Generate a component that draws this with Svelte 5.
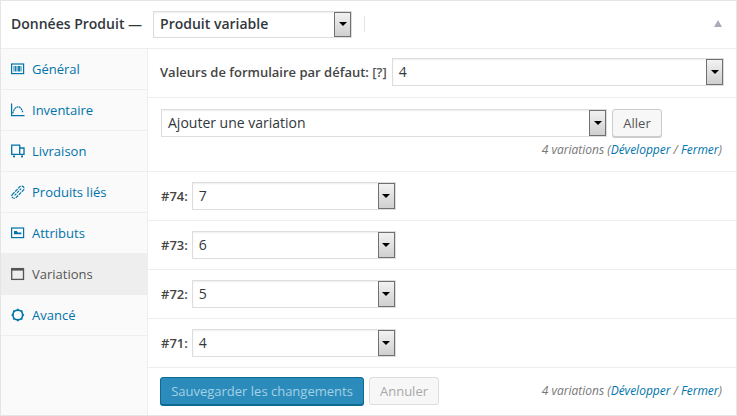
<script>
  const tabs = [
    { label: 'Général', icon: 'general' },
    { label: 'Inventaire', icon: 'inventory' },
    { label: 'Livraison', icon: 'shipping' },
    { label: 'Produits liés', icon: 'linked' },
    { label: 'Attributs', icon: 'attr' },
    { label: 'Variations', icon: 'var', active: true },
    { label: 'Avancé', icon: 'adv' }
  ];
  const variations = [['#74', '7'], ['#73', '6'], ['#72', '5'], ['#71', '4']];
</script>

{#snippet select(text, cls)}
  <div class="select {cls}">
    <span class="value">{text}</span>
    <span class="arrow"><i></i></span>
  </div>
{/snippet}

{#snippet count()}
  <div class="count">4 variations (<a href="#x">Développer</a> / <a href="#x">Fermer</a>)</div>
{/snippet}

<div class="panel">
  <header>
    <h2>Données Produit —</h2>
    {@render select('Produit variable', 'type')}
    <span class="sep"></span>
    <span class="toggle"></span>
  </header>
  <div class="body">
    <nav>
      {#each tabs as t}
        <a href="#x" class="tab" class:active={t.active}>
          <svg width="14" height="14" viewBox="0 0 14 14" fill="none" stroke="currentColor" stroke-width="1.2">
            {#if t.icon === 'general'}
              <rect x="0.600" y="2" width="12" height="9.600" stroke-width="1.200" />
              <path d="M3 4v5.500M4.500 4v5.500M6 4v5.500M7.500 4v5.500M8.500 4v5.500M10 4v5.500" stroke-width="0.900" />
            {:else if t.icon === 'inventory'}
              <path d="M0.600 0.500v12.200h12.900" />
              <path d="M1.500 10.500C3 6.500 4.500 3.800 7 3.800c2.300 0 3.800 2.400 4.800 5.400" stroke-dasharray="2 0.500" />
            {:else if t.icon === 'shipping'}
              <path d="M0.700 1.200h8v9.200h-8zM8.700 4h4.300v6.400H8.700" stroke-width="1.300" />
              <rect x="2" y="11.500" width="2" height="1.800" fill="currentColor" stroke="none" />
              <rect x="10" y="11.500" width="2" height="1.800" fill="currentColor" stroke="none" />
            {:else if t.icon === 'linked'}
              <path d="M1.200 9.600 8.600 1.900c1.200-1.100 3-.9 3.800-.1s.9 2.300 0 3.400L5 12.600c-1 .9-2.600.8-3.500 0S.4 10.500 1.200 9.600Z" stroke-dasharray="3.400 0.900" />
              <path d="M3.600 10.400 10.200 3.600" stroke-width="1.100" stroke-dasharray="2.600 1" />
            {:else if t.icon === 'attr'}
              <rect x="0.600" y="2" width="12" height="9.600" stroke-width="1.200" />
              <path d="M3 5h2.800l1 1.500h3.600v1.800H3z" fill="currentColor" stroke="none" />
            {:else if t.icon === 'var'}
              <rect x="0.700" y="1.600" width="11.800" height="10.800" stroke-width="1.300" />
              <rect x="0.200" y="1" width="12.800" height="2.600" fill="currentColor" stroke="none" />
            {:else}
              <circle cx="6.800" cy="7" r="4.900" stroke-width="1.700" />
              <path d="M6.800 0.700v1.600M6.800 11.700v1.600M0.500 7h1.600M11.500 7h1.600M2.300 2.500l1.100 1.100M10.200 10.400l1.100 1.100M2.300 11.500l1.100-1.100M10.200 3.600l1.100-1.100" stroke-width="1.700" />
            {/if}
          </svg>
          <span>{t.label}</span>
        </a>
      {/each}
    </nav>
    <main>
      <section class="defaults">
        <strong>Valeurs de formulaire par défaut: <span class="help">[?]</span></strong>
        {@render select('4', 'grow')}
      </section>
      <section class="add">
        <div class="addrow">
          {@render select('Ajouter une variation', 'grow')}
          <button class="btn">Aller</button>
        </div>
        {@render count()}
      </section>
      {#each variations as [id, v]}
        <section class="var">
          <strong>{id}:</strong>
          {@render select(v, 'small')}
        </section>
      {/each}
      <section class="toolbar">
        <button class="primary">Sauvegarder les changements</button>
        <button class="btn cancel">Annuler</button>
        {@render count()}
      </section>
    </main>
  </div>
</div>

<style>
  :global(body) { margin: 0; background: #fff; }
  .panel {
    width: 737px;
    height: 416px;
    box-sizing: border-box;
    border: 1px solid #e5e5e5;
    font-family: "Open Sans", sans-serif;
    font-size: 13px;
    color: #444;
    background: #fff;
    overflow: hidden;
  }
  header {
    height: 48px;
    box-sizing: border-box;
    display: flex;
    align-items: center;
    padding: 0 14px 2px 10px;
    border-bottom: 1px solid #eee;
  }
  h2 { margin: 0 11px 0 0; font-size: 14px; font-weight: 600; color: #32373c; line-height: 20px; white-space: nowrap; }
  .select {
    display: flex;
    align-items: center;
    box-sizing: border-box;
    height: 28px;
    border: 1px solid #ddd;
    box-shadow: inset 0 1px 2px rgba(0, 0, 0, 0.07);
    background: #fff;
    font-size: 14px;
    color: #32373c;
  }
  .value { flex: 1; padding-left: 6px; line-height: 26px; }
  .arrow {
    width: 17px;
    height: 26px;
    box-sizing: border-box;
    border: 1px solid #707070;
    background: linear-gradient(#f2f2f2, #cfcfcf);
    display: flex;
    align-items: center;
    justify-content: center;
  }
  .arrow i { width: 0; height: 0; border: 4px solid transparent; border-top-color: #000; border-bottom: 0; }
  .type { width: 199px; height: 27px; margin-top: 1px; }
  .type .arrow { height: 25px; }
  .type .value { font-weight: 600; }
  .sep { width: 1px; height: 16px; background: #e5e5e5; margin-left: 12px; }
  .toggle {
    margin-left: auto;
    width: 0;
    height: 0;
    border: 4.500px solid transparent;
    border-top: 0;
    border-bottom: 7px solid #a9aabb;
  }
  .body { display: flex; height: 366px; }
  nav { width: 146px; flex: none; background: #fafafa; border-right: 1px solid #eee; }
  .tab {
    display: flex;
    align-items: center;
    gap: 7px;
    height: 41px;
    box-sizing: border-box;
    padding: 0 0 0 10px;
    border-bottom: 1px solid #eee;
    color: #0073aa;
    text-decoration: none;
  }
  .tab.active { background: #eee; color: #555; }
  main { flex: 1; min-width: 0; }
  section { box-sizing: border-box; border-bottom: 1px solid #eee; }
  strong { font-weight: 600; white-space: nowrap; font-size: 13px; }
  .help { color: #555; }
  .defaults { height: 49px; display: flex; align-items: center; gap: 5px; padding: 0 12px 2px; }
  .add { height: 74px; padding: 11px 14px 0 13px; }
  .addrow { display: flex; gap: 5px; align-items: center; }
  .btn {
    height: 28px;
    box-sizing: border-box;
    padding: 0 10px;
    border: 1px solid #ccc;
    border-radius: 3px;
    background: #f7f7f7;
    box-shadow: 0 1px 0 #ccc;
    font: 13px "Open Sans", sans-serif;
    color: #555;
  }
  .addrow .btn { width: 50px; padding: 0; margin-right: 60px; flex: none; }
  .count { font-size: 12px; font-style: italic; color: #777; text-align: right; line-height: 16px; white-space: nowrap; }
  .add .count { margin-top: 5px; }
  .count a { color: #0073aa; text-decoration: none; }
  .grow { flex: 1; min-width: 0; }
  .var { height: 49px; display: flex; align-items: center; gap: 4px; padding: 0 13px; }
  .small { width: 204px; }
  .toolbar { height: 48px; display: flex; align-items: center; gap: 5px; padding: 0 14px 2px 12px; border-bottom: 0; }
  .toolbar .count { margin-left: auto; }
  .primary {
    width: 204px;
    height: 28px;
    box-sizing: border-box;
    border: 1px solid #0e6a93;
    border-radius: 3px;
    background: #2b8cbb;
    box-shadow: 0 1px 0 #0e6a93;
    color: #a5d0e5;
    font: 13px "Open Sans", sans-serif;
    padding: 0;
  }
  .cancel { color: #a8a8a8; background: #f7f7f7; border-color: #ddd; box-shadow: none; width: 70px; padding: 0; }
</style>
